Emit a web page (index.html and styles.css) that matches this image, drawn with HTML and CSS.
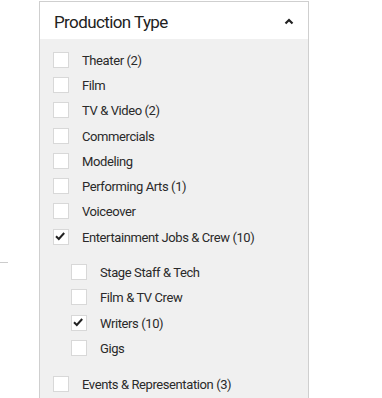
FILE: index.html
```html
<!DOCTYPE html>
<html>

<head>
    <title>Production Type</title>
    <meta charset="UTF-8">
    <link rel="stylesheet" href="styles.css">
</head>

<body>
    <div class="page">
        <div class="side">
            <div class="side-line"></div>
        </div>
        <div class="panel">
            <div class="panel-head">
                <span class="panel-title">Production Type</span>
                <svg class="caret" width="10" height="7" viewBox="0 0 10 7">
                    <path d="M1.5 5.5 L5 2 L8.5 5.5" fill="none" stroke="#222" stroke-width="2.2"/>
                </svg>
            </div>
            <ul class="options">
                <li class="option"><span class="box"></span><span class="label">Theater (2)</span></li>
                <li class="option"><span class="box"></span><span class="label">Film</span></li>
                <li class="option"><span class="box"></span><span class="label">TV &amp; Video (2)</span></li>
                <li class="option"><span class="box"></span><span class="label">Commercials</span></li>
                <li class="option"><span class="box"></span><span class="label">Modeling</span></li>
                <li class="option"><span class="box"></span><span class="label">Performing Arts (1)</span></li>
                <li class="option"><span class="box"></span><span class="label">Voiceover</span></li>
                <li class="option">
                    <span class="box">
                        <svg width="14" height="14" viewBox="0 0 14 14"><path d="M3 7.2 L5.8 10 L11.2 4" fill="none" stroke="#222" stroke-width="2"/></svg>
                    </span>
                    <span class="label">Entertainment Jobs &amp; Crew (10)</span>
                </li>
                <li class="sub">
                    <ul class="options sub-options">
                        <li class="option"><span class="box"></span><span class="label">Stage Staff &amp; Tech</span></li>
                        <li class="option"><span class="box"></span><span class="label">Film &amp; TV Crew</span></li>
                        <li class="option">
                            <span class="box">
                                <svg width="14" height="14" viewBox="0 0 14 14"><path d="M3 7.2 L5.8 10 L11.2 4" fill="none" stroke="#222" stroke-width="2"/></svg>
                            </span>
                            <span class="label">Writers (10)</span>
                        </li>
                        <li class="option"><span class="box"></span><span class="label">Gigs</span></li>
                    </ul>
                </li>
                <li class="option"><span class="box"></span><span class="label">Events &amp; Representation (3)</span></li>
            </ul>
        </div>
    </div>
</body>

</html>
```

FILE: styles.css
```css
body {
    margin: 0;
    background-color: white;
    font-family: Roboto, "Liberation Sans", Arial, sans-serif;
}

.page {
    display: flex;
    height: 398px;
    overflow: hidden;
}

.side {
    width: 39px;
}

.side-line {
    width: 8px;
    height: 1px;
    margin-top: 262px;
    background-color: #cccccc;
}

.panel {
    width: 268px;
    margin-top: 1px;
    border: 1px solid #cfcfcf;
    border-bottom: none;
    background-color: #f0f0f0;
}

.panel-head {
    display: flex;
    justify-content: space-between;
    align-items: center;
    height: 37px;
    padding: 0 14px 0 14px;
    background-color: white;
}

.panel-title {
    font-size: 17px;
    letter-spacing: -0.6px;
    color: #222222;
    padding-top: 2px;
}

.caret {
    margin-top: 1px;
}

.options {
    list-style: none;
    margin: 0;
    padding: 8px 0 0 13px;
}

.option {
    display: flex;
    align-items: center;
    height: 25.3px;
}

.box {
    width: 14px;
    height: 14px;
    border: 1px solid #d8d8d8;
    background-color: white;
    margin-right: 13px;
    flex: none;
}

.box svg {
    display: block;
    margin: -1px 0 0 -1px;
}

.label {
    font-size: 13px;
    letter-spacing: -0.4px;
    color: #2a2a2a;
    padding-top: 1px;
}

.sub-options {
    padding: 10px 0 11px 18px;
}
```
